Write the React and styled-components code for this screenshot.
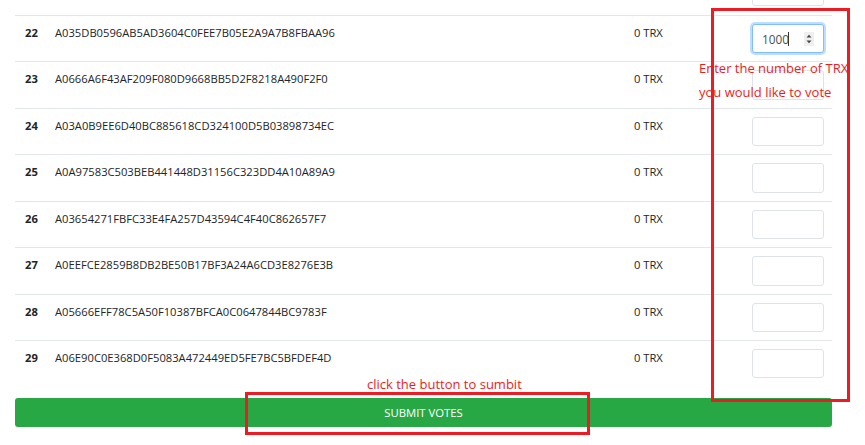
import React from "react";
import styled, { createGlobalStyle, css } from "styled-components";

const Global = createGlobalStyle`
  html, body { margin: 0; padding: 0; background: #fff; }
  body { overflow: hidden; font-family: "Open Sans", "Noto Sans", sans-serif; }
  * { box-sizing: border-box; }
`;

const Page = styled.div`
  position: relative;
  width: 865px;
  height: 445px;
  overflow: hidden;
  padding: 0 33px 0 15px;
`;

const Table = styled.div`
  margin-top: -31.43px;
  color: #212529;
`;

const Row = styled.div`
  display: grid;
  grid-template-columns: 30px 579px 118px 90px;
  border-top: 1px solid #e4e7ea;
  padding: 8px 0;
  height: 46.43px;
  &:first-child { border-top: none; }
`;

const Cell = styled.div`
  padding: 0 8px 0 10px;
  font-size: 11.2px;
  line-height: 18px;
  white-space: nowrap;
  font-weight: ${(p) => (p.$bold ? 700 : 400)};
`;

const InputCell = styled.div`
  padding-left: 10px;
`;

const Field = styled.div`
  display: flex;
  align-items: center;
  width: 72px;
  height: 29.43px;
  border: 1px solid #dfe3e8;
  border-radius: 3px;
  background: #fff;
  ${(p) =>
    p.$focused &&
    css`
      border-color: #80bdff;
      box-shadow: 0 0 0 2px rgba(0, 123, 255, 0.25);
    `}
`;

const Input = styled.input`
  flex: ${(p) => (p.$fit ? "none" : "1")};
  width: ${(p) => (p.$fit ? "35px" : "auto")};
  min-width: 0;
  border: none;
  outline: none;
  background: transparent;
  padding: 0 0 0 9px;
  font-family: inherit;
  font-size: 11.8px;
  color: #495057;
`;

const Caret = styled.span`
  display: inline-block;
  width: 1px;
  height: 14px;
  background: #333;
`;

const Spinner = styled.svg`
  flex: none;
  margin: 0 9px 0 auto;
`;

const SubmitButton = styled.button`
  display: block;
  width: 817px;
  height: 29px;
  margin-top: 11.6px;
  border: none;
  border-radius: 3px;
  background: #28a745;
  color: #fff;
  font-family: inherit;
  font-size: 11.3px;
  text-transform: uppercase;
  cursor: pointer;
`;

const Mark = styled.div`
  position: absolute;
  border: 3px solid #ec1c24;
  left: ${(p) => p.$x}px;
  top: ${(p) => p.$y}px;
  width: ${(p) => p.$w}px;
  height: ${(p) => p.$h}px;
  pointer-events: none;
`;

const Note = styled.div`
  position: absolute;
  left: ${(p) => p.$x}px;
  top: ${(p) => p.$y}px;
  color: #ec1c24;
  font-size: 13px;
  line-height: 23.5px;
  white-space: nowrap;
  pointer-events: none;
`;

const rows = [
  ["21", null],
  ["22", "A035DB0596AB5AD3604C0FEE7B05E2A9A7B8FBAA96", "1000"],
  ["23", "A0666A6F43AF209F080D9668BB5D2F8218A490F2F0"],
  ["24", "A03A0B9EE6D40BC885618CD324100D5B03898734EC"],
  ["25", "A0A97583C503BEB441448D31156C323DD4A10A89A9"],
  ["26", "A03654271FBFC33E4FA257D43594C4F40C862657F7"],
  ["27", "A0EEFCE2859B8DB2BE50B17BF3A24A6CD3E8276E3B"],
  ["28", "A05666EFF78C5A50F10387BFCA0C0647844BC9783F"],
  ["29", "A06E90C0E368D0F5083A472449ED5FE7BC5BFDEF4D"],
];

function VoteField({ value }) {
  const focused = value !== undefined;
  return (
    <Field $focused={focused}>
      <Input type="text" defaultValue={value || ""} size={1} $fit={focused} />
      {focused && <Caret />}
      {focused && (
        <Spinner width="10" height="14" viewBox="0 0 10 14">
          <rect width="10" height="14" fill="#efefef" />
          <path d="M2.5 5.5 L5 2.8 L7.5 5.5 Z" fill="#444" />
          <path d="M2.5 8.5 L5 11.2 L7.5 8.5 Z" fill="#444" />
        </Spinner>
      )}
    </Field>
  );
}

export default function App() {
  return (
    <>
      <Global />
      <Page>
        <Table>
          {rows.map(([n, addr, val]) => (
            <Row key={n}>
              <Cell $bold>{addr ? n : ""}</Cell>
              <Cell>{addr || ""}</Cell>
              <Cell>{addr ? "0 TRX" : ""}</Cell>
              <InputCell>
                <VoteField value={val} />
              </InputCell>
            </Row>
          ))}
        </Table>
        <SubmitButton>Submit Votes</SubmitButton>
        <Mark $x={711} $y={8} $w={139} $h={394} />
        <Note $x={699} $y={57}>
          Enter the number of TRX
          <br />
          you would like to vote
        </Note>
        <Note $x={367} $y={373}>click the button to sumbit</Note>
        <Mark $x={245} $y={392} $w={345} $h={43} />
      </Page>
    </>
  );
}
